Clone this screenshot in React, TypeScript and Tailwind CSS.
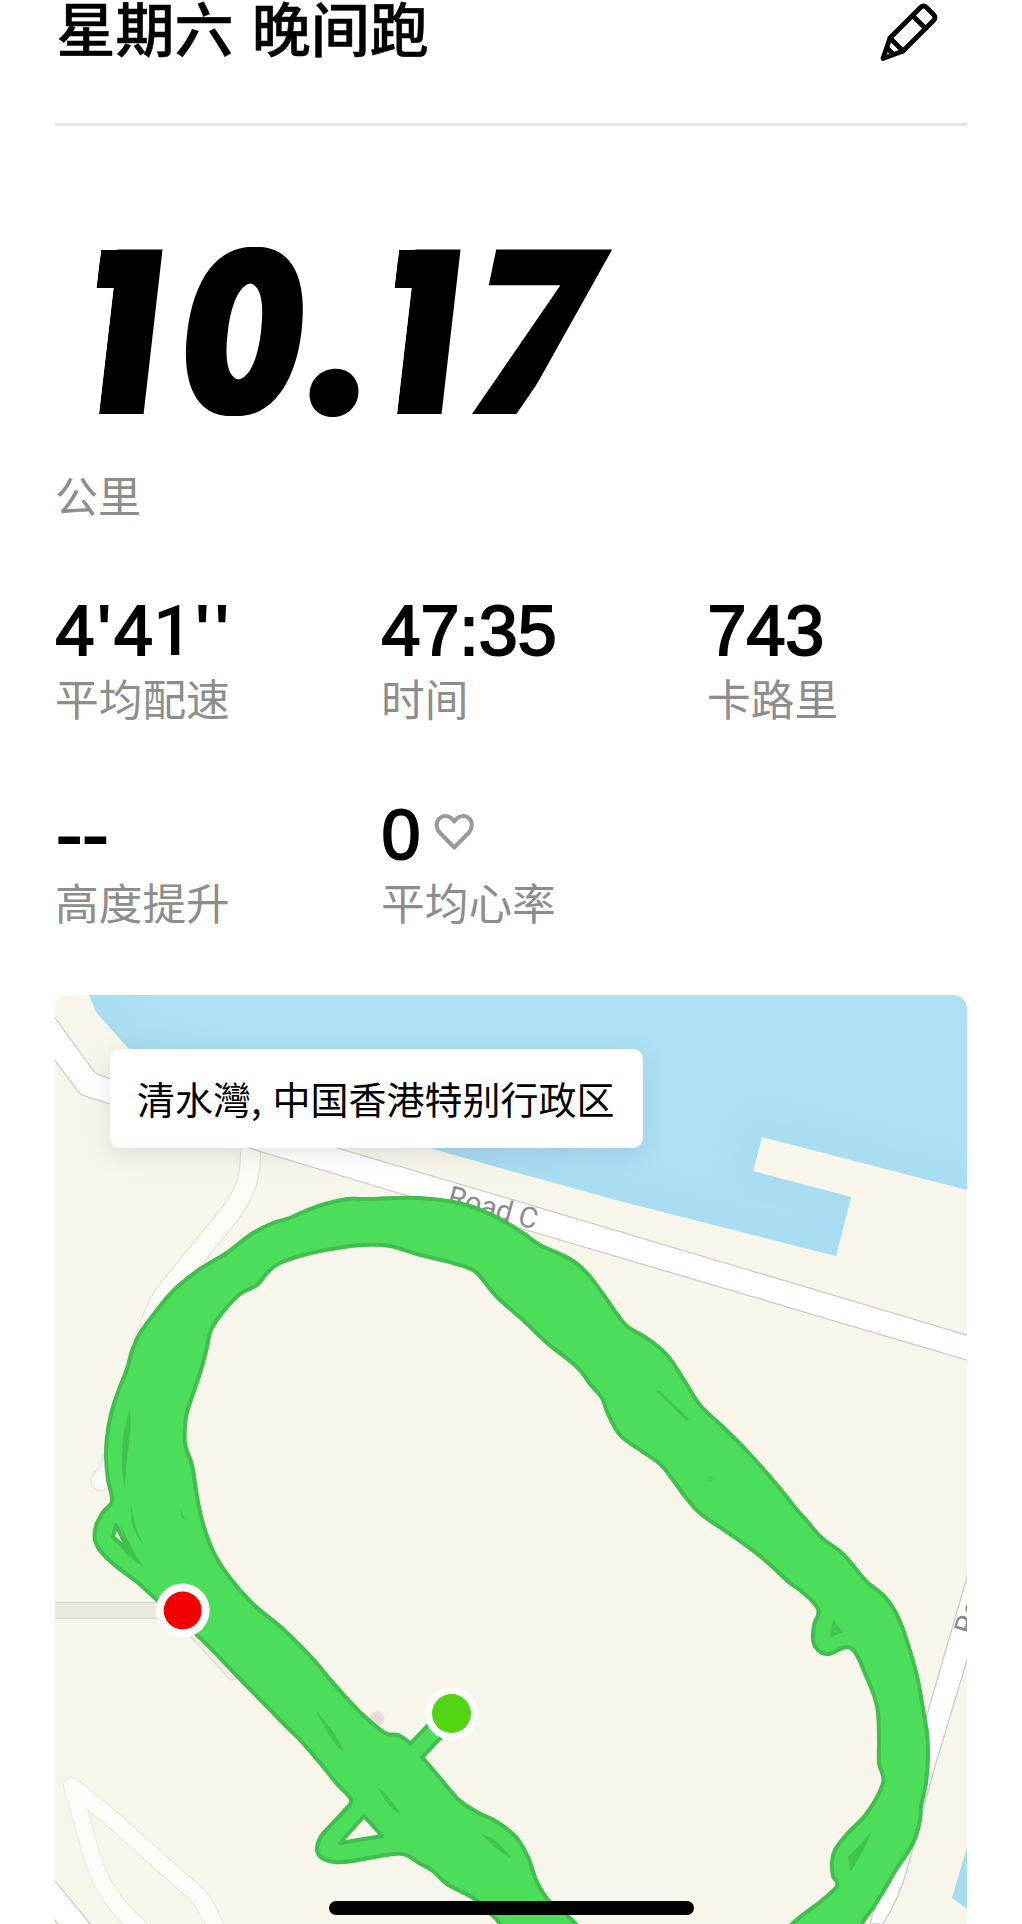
import React from "react";

type Point = [number, number];

const CJK = "font-['Noto_Sans_CJK_SC',sans-serif]";

/* Smooth closed curve through the given points (Catmull-Rom as cubic Béziers). */
function smooth(points: Point[], tension = 0.18): string {
  const n = points.length;
  let d = `M${points[0][0]} ${points[0][1]}`;
  for (let i = 0; i < n; i++) {
    const a = points[(i - 1 + n) % n];
    const b = points[i];
    const c = points[(i + 1) % n];
    const e = points[(i + 2) % n];
    d += `C${b[0] + (c[0] - a[0]) * tension} ${b[1] + (c[1] - a[1]) * tension} ${c[0] - (e[0] - b[0]) * tension} ${c[1] - (e[1] - b[1]) * tension} ${c[0]} ${c[1]}`;
  }
  return d + "Z";
}

const ROUTE: Point[] = [
  [862, 1924], [873, 1908], [883, 1892], [897, 1868], [908, 1852], [916, 1836], [920, 1820], [921, 1806],
  [926, 1783], [928, 1757], [927, 1733], [922, 1703], [917, 1676], [907, 1641], [898, 1617], [886, 1598],
  [867, 1582], [856, 1569], [842, 1553], [822, 1538], [807, 1521], [798, 1511], [777, 1485], [748, 1452],
  [723, 1427], [700, 1405], [684, 1380], [667, 1355], [648, 1339], [628, 1327], [617, 1314], [603, 1294],
  [587, 1273], [570, 1259], [540, 1245], [523, 1233], [500, 1219], [473, 1207], [448, 1201], [420, 1198],
  [393, 1198], [373, 1199], [360, 1199], [347, 1199], [325, 1204], [303, 1212], [287, 1219], [273, 1223],
  [253, 1233], [237, 1245], [225, 1254], [200, 1269], [175, 1289], [157, 1310], [140, 1333], [132, 1351],
  [127, 1369], [118, 1392], [111, 1414], [107, 1437], [106, 1457], [108, 1480], [112, 1501], [103, 1512],
  [96, 1526], [95, 1540], [102, 1553], [117, 1567], [137, 1582], [157, 1600], [197, 1635], [220, 1658],
  [240, 1679], [280, 1720], [300, 1740], [320, 1763], [337, 1784], [351, 1800], [343, 1812], [330, 1826],
  [320, 1838], [317, 1850], [322, 1858], [335, 1862], [353, 1861], [380, 1856], [403, 1854], [419, 1863],
  [433, 1871], [447, 1884], [473, 1898], [487, 1911], [500, 1924], [520, 1960], [600, 1960], [575, 1923],
  [550, 1902], [537, 1882], [528, 1857], [516, 1837], [497, 1822], [477, 1812], [459, 1800], [440, 1778],
  [423, 1758], [411, 1744], [398, 1735], [385, 1733],
  [363, 1715], [343, 1694], [328, 1677], [313, 1659], [283, 1629], [253, 1604], [230, 1578], [213, 1551],
  [202, 1520], [196, 1490], [192, 1465], [185, 1443], [186, 1417], [191, 1400], [201, 1370], [207, 1347],
  [211, 1330], [223, 1312], [240, 1294], [257, 1285], [267, 1273], [280, 1263], [307, 1254], [338, 1248],
  [363, 1245], [390, 1246], [417, 1254], [453, 1263], [473, 1270], [483, 1280], [497, 1297], [523, 1320],
  [547, 1343], [577, 1367], [590, 1384], [602, 1398], [608, 1414], [620, 1435], [640, 1450], [660, 1464],
  [673, 1480], [687, 1499], [702, 1515], [730, 1534], [760, 1556], [790, 1583], [800, 1590], [818, 1609],
  [814, 1625], [813, 1640], [818, 1650], [829, 1654], [851, 1648], [867, 1678], [877, 1706], [879, 1738],
  [879, 1763], [883, 1783], [867, 1813], [847, 1834], [835, 1850], [832, 1863], [833, 1876], [837, 1886],
  [820, 1902], [792, 1924], [760, 1960], [850, 1960],
];

const WATER =
  "M89 995L96 1012L128 1048L430 1148L500 1168L620 1201L836 1256L851 1197L753 1171L762 1137L967 1190V995Z";

function RouteMap() {
  return (
    <svg viewBox="55 995 912 929" className="block h-full w-full">
      <defs>
        <clipPath id="water">
          <path d={WATER} />
        </clipPath>
        <filter id="soft" x="-20%" y="-20%" width="140%" height="140%">
          <feGaussianBlur stdDeviation="16" />
        </filter>
      </defs>
      <rect x="55" y="995" width="912" height="929" fill="#f8f5eb" />
      <path d={WATER} fill="#aee1f6" />
      <g clipPath="url(#water)">
        <path
          d="M91 985L96 1012L128 1048L430 1148L500 1168L620 1201L836 1256L851 1197L753 1171L762 1137L990 1196"
          fill="none"
          stroke="#a1d6eb"
          strokeWidth="28"
          opacity="0.6"
          filter="url(#soft)"
        />
      </g>
      <path d="M967 1847L952 1898L967 1909Z" fill="#a8dbef" />

      <g fill="none" strokeLinecap="round" strokeLinejoin="round">
        <path d="M251 1140L250 1165C248 1192 234 1210 216 1231L166 1292C152 1312 145 1340 135 1375L110 1470L101 1481" stroke="#e2ddd6" strokeWidth="21" />
        <path d="M251 1140L250 1165C248 1192 234 1210 216 1231L166 1292C152 1312 145 1340 135 1375L110 1470L101 1481" stroke="#fdfcf7" strokeWidth="19" />
        <path d="M140 1928C112 1904 98 1880 90 1850C84 1828 78 1806 72 1786L112 1819L195 1893C204 1902 210 1912 216 1928" stroke="#ebe6df" strokeWidth="18" />
        <path d="M140 1928C112 1904 98 1880 90 1850C84 1828 78 1806 72 1786L112 1819L195 1893C204 1902 210 1912 216 1928" stroke="#fdfcf8" strokeWidth="16" />
        <path d="M183 1622L232 1676" stroke="#ddd8d2" strokeWidth="9" />
        <path d="M183 1622L232 1676" stroke="#f2eee6" strokeWidth="7" />
      </g>

      <g stroke="#cbc6c6" strokeWidth="1.2">
        <path d="M45 1004L93 1070Q96 1074 102 1076L300 1137L500 1196L742 1268L980 1339V1364L540 1234L405 1195L262 1152L88 1097Q80 1095 77 1090L45 1047Z" fill="#ffffff" />
        <path d="M980 1532L967 1577L927 1715L870 1924H883Q899 1898 907 1870L933 1773L980 1617Z" fill="#ffffff" />
        <path d="M50 1875L92 1926H60L50 1914Z" fill="#ffffff" />
        <path d="M50 1602.500H180M50 1618.500H180" stroke="#d9d6cf" />
      </g>
      <rect x="55" y="1603" width="120" height="15" fill="#eae8df" />
      <circle cx="377" cy="1719" r="6" fill="#e2dcd5" stroke="#e6e0da" strokeWidth="3" />

      <g fill="#8d898e" fontFamily="Roboto, sans-serif" fontSize="29">
        <text transform="translate(446 1205) rotate(15.500)" textLength="92">Road C</text>
        <text transform="translate(973 1636) rotate(-73)">Road</text>
      </g>

      <path d="M452 1713L411 1756" stroke="#41bf4e" strokeWidth="22" />
      <path d={smooth(ROUTE)} fill="#4cdd5a" stroke="#41bf4e" strokeWidth="4" strokeLinejoin="round" />
      <path d="M452 1713L409 1758" stroke="#4cdd5a" strokeWidth="14" />

      <g stroke="#41bf4e" strokeWidth="4" strokeLinejoin="round" fill="#f8f5eb">
        <path d="M116 1525L128 1550L113 1537Z" />
        <path d="M364 1816L382 1836L340 1843Z" />
      </g>
      <g fill="#41c44f">
        <path d="M130 1408Q132 1430 127 1458L125 1488Q119 1465 124 1432Q127 1418 130 1408Z" />
        <path d="M131 1505Q134 1528 144 1545Q129 1530 131 1505Z" />
        <path d="M119 1520Q130 1548 144 1567Q131 1560 120 1547L128 1549Z" />
        <path d="M180 1508L185 1520L182 1518Z" />
        <path d="M316 1711Q336 1732 344 1752Q334 1747 316 1711Z" />
        <path d="M378 1787Q393 1800 400 1814Q388 1809 378 1787Z" />
        <path d="M480 1833Q499 1839 511 1858Q498 1852 480 1833Z" />
        <path d="M872 1831Q860 1859 850 1872L848 1857Q856 1849 872 1831Z" />
        <path d="M833 1620L843 1632L829 1638Z" />
      </g>
      <path d="M835 1629L837 1632L833 1633Z" fill="#4cdd5a" />
      <path d="M658 1391L688 1420" stroke="#41c44f" strokeWidth="3" />
      <circle cx="710" cy="1479" r="3" fill="#47d454" />

      <circle cx="182.700" cy="1610.500" r="27" fill="#ffffff" />
      <circle cx="182.700" cy="1610.500" r="19" fill="#f20000" />
      <circle cx="451.500" cy="1713.500" r="26.500" fill="#ffffff" />
      <circle cx="451.500" cy="1713.500" r="19.500" fill="#54d514" />
    </svg>
  );
}

function PencilIcon() {
  return (
    <svg viewBox="878 2 62 60" className="h-[60px] w-[62px]" fill="none" stroke="#000" strokeWidth="4.800" strokeLinejoin="round" strokeLinecap="round">
      <path d="M890 38L920.500 7.500Q923.500 4.500 926.500 7.500L933.500 14.500Q936.500 17.500 933.500 20.500L903 51L883 58.500Z" />
      <path d="M912.500 15.500L925.500 28.500M890 38L903 51M887 48L893 54" />
    </svg>
  );
}

function HeartIcon() {
  return (
    <svg viewBox="434 812 43 40" className="h-[40px] w-[43px]" fill="none" stroke="#999" strokeWidth="4" strokeLinejoin="round">
      <path d="M455.300 847.500L441.500 833.500C436.500 828.500 436.500 821.500 441 818C445.500 814.500 452 816 455.300 821.500C458.600 816 465 814.500 469.600 818C474 821.500 474 828.500 469 833.500Z" />
    </svg>
  );
}

/* The display "1": its flag is squared off and cut level, the stem stays plain. */
const ONE =
  "relative block h-[200px] origin-[0_182px] skew-x-[-6.600deg] [clip-path:polygon(30px_0,124px_0,124px_200px,47px_200px,47px_56px,30px_56px)] before:absolute before:left-[30px] before:top-[18px] before:h-[38px] before:w-[34px] before:bg-black before:content-['']";

const VALUE = "font-['Liberation_Sans',sans-serif] text-[70px] leading-[80px] text-black [-webkit-text-stroke:2px_#000]";

function Quote() {
  return <span className="inline-block w-[19.500px] text-center">'</span>;
}

function Stat({ label, children }: { label: string; children: React.ReactNode }) {
  return (
    <div className="h-[204px] pt-[3px]">
      <div className={`flex h-[80px] whitespace-pre pl-[0.500px] ${VALUE}`}>{children}</div>
      <div className={`${CJK} mt-[-4px] text-[43.700px] leading-[60px] text-[#8d8d8d]`}>{label}</div>
    </div>
  );
}

export default function App() {
  return (
    <main className="relative h-[1924px] w-[1022px] overflow-hidden bg-white px-[55px]">
      <header className="flex h-[126px] items-start justify-between border-b-[3px] border-[#e4e4e4]">
        <h1 className={`${CJK} mt-[-3px] pl-[1.500px] text-[59px] font-medium leading-[60px] text-black [-webkit-text-stroke:0.500px_#000] [word-spacing:5px]`}>星期六 晚间跑</h1>
        <div className="mr-[27px] mt-[2px]">
          <PencilIcon />
        </div>
      </header>

      <section className="h-[462px]">
        <div className="flex h-[338px] pl-[7px] pt-[106px] font-['Inter',sans-serif] text-[226px] font-black leading-[200px] text-black">
          <span className={`${ONE} ml-[-10px] w-[130px]`}>1</span>
          <span className="block h-[200px] w-[114px] origin-[0_182px] scale-x-[0.745] italic [text-shadow:4px_0_0_#000,-4px_0_0_#000]">0</span>
          <span className="block h-[200px] w-[53.500px] origin-[0_182px] scale-[1.080] italic">.</span>
          <span className={`${ONE} w-[116.500px]`}>1</span>
          <span className="block h-[200px] w-[120px] origin-[0_182px] skew-x-[-3deg] scale-x-[0.950] italic [clip-path:polygon(0_0,155px_0,145px_18px,57px_182px,57px_200px,0_200px)]">7</span>
        </div>
        <div className={`${CJK} text-[43px] leading-[60px] text-[#8d8d8d]`}>公里</div>
      </section>

      <section className="grid h-[407px] grid-cols-[326px_326px_1fr] content-start">
        <Stat label="平均配速">
          <span>4</span>
          <Quote />
          <span>4</span>
          <span className="font-['Roboto',sans-serif] font-medium [-webkit-text-stroke:0]">1</span>
          <Quote />
          <Quote />
        </Stat>
        <Stat label="时间">47:35</Stat>
        <Stat label="卡路里">743</Stat>
        <Stat label="高度提升">
          <span className="origin-left scale-x-[1.130]">--</span>
        </Stat>
        <Stat label="平均心率">
          <span>0</span>
          <span className="ml-[13px] mt-[17px] block">
            <HeartIcon />
          </span>
        </Stat>
      </section>

      <section className="relative h-[929px] w-[912px] overflow-hidden rounded-t-[14px]">
        <RouteMap />
        <div className={`${CJK} absolute left-[55px] top-[54px] flex h-[99px] w-[533px] items-center whitespace-pre rounded-[10px] bg-white pb-[2px] pl-[27px] text-[38px] leading-[50px] text-black shadow-[0_6px_28px_rgba(0,0,0,0.100)] [word-spacing:2.500px]`}>
          清水灣, 中国香港特别行政区
        </div>
      </section>

      <div className="absolute left-[329px] top-[1901px] h-[14px] w-[365px] rounded-full bg-black" />
    </main>
  );
}
